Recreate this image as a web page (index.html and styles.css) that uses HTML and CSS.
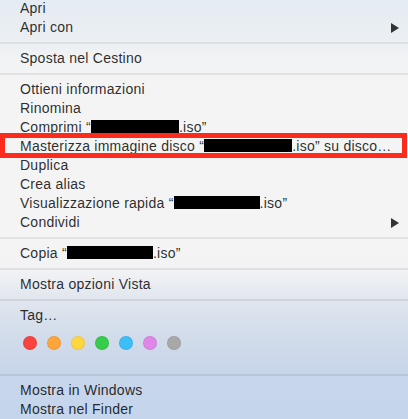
FILE: index.html
```html
<!DOCTYPE html>
<html lang="it">
<head>
<meta charset="utf-8">
<title>Menu contestuale</title>
<link rel="stylesheet" href="styles.css">
</head>
<body>
<div class="menu">
  <div class="item">Apri</div>
  <div class="item sub">Apri con<span class="arrow"></span></div>
  <div class="sep"></div>
  <div class="item">Sposta nel Cestino</div>
  <div class="sep"></div>
  <div class="item">Ottieni informazioni</div>
  <div class="item">Rinomina</div>
  <div class="item">Comprimi “<span class="redact"></span>.iso”</div>
  <div class="item marked">Masterizza immagine disco “<span class="redact"></span>.iso” su disco…</div>
  <div class="item">Duplica</div>
  <div class="item">Crea alias</div>
  <div class="item">Visualizzazione rapida “<span class="redact r2"></span>.iso”</div>
  <div class="item sub">Condividi<span class="arrow"></span></div>
  <div class="sep"></div>
  <div class="item">Copia “<span class="redact r2"></span>.iso”</div>
  <div class="sep"></div>
  <div class="item">Mostra opzioni Vista</div>
  <div class="sep"></div>
  <div class="item">Tag…</div>
  <div class="tags">
    <span class="dot red"></span>
    <span class="dot orange"></span>
    <span class="dot yellow"></span>
    <span class="dot green"></span>
    <span class="dot blue"></span>
    <span class="dot purple"></span>
    <span class="dot gray"></span>
  </div>
  <div class="sep"></div>
  <div class="item">Mostra in Windows</div>
  <div class="item">Mostra nel Finder</div>
</div>
</body>
</html>
```
FILE: styles.css
```css
html, body {
  margin: 0;
  padding: 0;
}
body {
  width: 408px;
  height: 419px;
  overflow: hidden;
  background: linear-gradient(to bottom,
    #e4ebf2 0px,
    #ebeff3 40px,
    #f2f3f4 62px,
    #f4f4f4 90px,
    #f4f4f4 255px,
    #f1f2f4 272px,
    #e0e6ee 300px,
    #d2dcea 335px,
    #c8d6ea 370px,
    #c4d5ec 419px);
  font-family: "Liberation Sans", Arial, sans-serif;
  font-size: 14px;
  letter-spacing: 0.25px;
  color: rgba(0, 0, 0, 0.84);
}
.menu {
  display: flex;
  flex-direction: column;
  margin-top: -1px;
}
.item {
  height: 19px;
  line-height: 19px;
  padding-left: 20px;
  white-space: nowrap;
  position: relative;
}
.sub {
  display: flex;
  align-items: center;
  justify-content: space-between;
  padding-right: 9px;
}
.arrow {
  width: 0;
  height: 0;
  border-top: 5px solid transparent;
  border-bottom: 5px solid transparent;
  border-left: 8px solid #333;
}
.sep {
  height: 12px;
  display: flex;
  align-items: center;
}
.sep::before {
  content: "";
  display: block;
  width: 100%;
  height: 2px;
  background: rgba(0, 0, 0, 0.07);
}
.redact {
  display: inline-block;
  width: 88px;
  height: 13px;
  background: #000;
  vertical-align: -1px;
}
.redact.r2 {
  width: 86px;
}
.marked::after {
  content: "";
  position: absolute;
  left: 0;
  right: 1px;
  top: -4px;
  bottom: -2px;
  border: 5px solid #fc2b1c;
  box-sizing: border-box;
}
.tags {
  height: 44px;
  display: flex;
  gap: 10px;
  padding: 10.5px 0 0 23px;
  box-sizing: border-box;
}
.dot {
  width: 14px;
  height: 14px;
  border-radius: 50%;
  box-sizing: border-box;
  border: 1px solid rgba(0, 0, 0, 0.06);
}
.red { background: #f9433f; }
.orange { background: #fda53b; }
.yellow { background: #fdd640; }
.green { background: #38cc4b; }
.blue { background: #3cbef6; }
.purple { background: #e086e6; }
.gray { background: #a8a8a8; }
```
